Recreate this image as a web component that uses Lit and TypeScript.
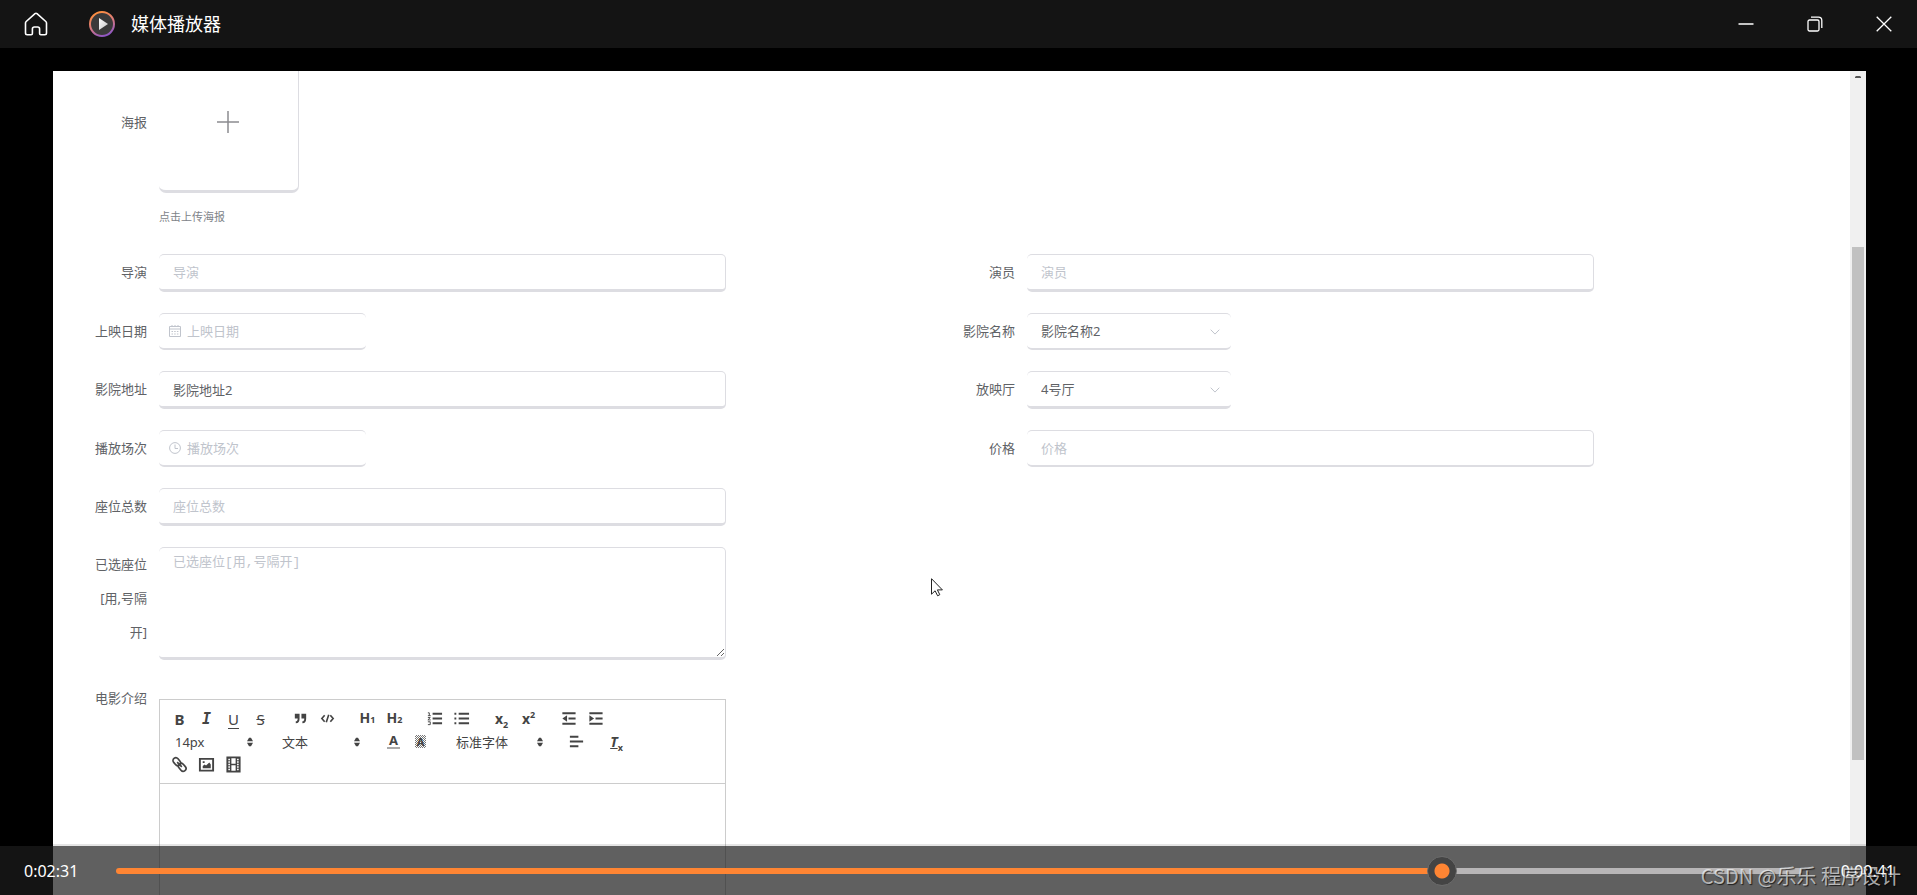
import { LitElement, html, css, svg, nothing } from "lit";
import { customElement, property, state } from "lit/decorators.js";
import { classMap } from "lit/directives/class-map.js";
import { styleMap } from "lit/directives/style-map.js";

type Field = {
  id: string;
  label: string;
  kind: "text" | "date" | "time" | "select";
  value?: string;
};

const ROWS: { thick: boolean; fields: Field[] }[] = [
  {
    thick: true,
    fields: [
      { id: "director", label: "导演", kind: "text" },
      { id: "actor", label: "演员", kind: "text" },
    ],
  },
  {
    thick: false,
    fields: [
      { id: "release", label: "上映日期", kind: "date" },
      { id: "cinema", label: "影院名称", kind: "select", value: "影院名称2" },
    ],
  },
  {
    thick: true,
    fields: [
      { id: "address", label: "影院地址", kind: "text", value: "影院地址2" },
      { id: "hall", label: "放映厅", kind: "select", value: "4号厅" },
    ],
  },
  {
    thick: false,
    fields: [
      { id: "session", label: "播放场次", kind: "time" },
      { id: "price", label: "价格", kind: "text" },
    ],
  },
  { thick: true, fields: [{ id: "seats", label: "座位总数", kind: "text" }] },
];

const calendarIcon = svg`<svg class="prefix" viewBox="0 0 12 12" fill="none" stroke="#c0c4cc">
  <path d="M.5 1.5h11v10H.5zM.5 4h11M3 0v2M6 0v2M9 0v2"/><path d="M2.5 6.5h7M2.5 9h7" stroke-dasharray="1.5 1.2"/></svg>`;
const clockIcon = svg`<svg class="prefix" viewBox="0 0 12 12" fill="none" stroke="#c0c4cc">
  <circle cx="6" cy="6" r="5.4"/><path d="M6 2.5v4h3"/></svg>`;

const pickerArrows = svg`<svg class="updown" viewBox="0 0 6 10" fill="#444">
  <path d="M0 4.200 2 .7h2l2 3.500zM0 5.800l2 3.500h2l2-3.500z"/></svg>`;

@customElement("movie-form")
export class MovieForm extends LitElement {
  static styles = css`
    :host {
      display: block;
      color: #606266;
      font: 13px/20px "Noto Sans", "Noto Sans CJK SC", sans-serif;
    }
    * { box-sizing: border-box; }
    .form {
      display: flex;
      flex-direction: column;
      gap: 21px;
      padding: 0 25px 0 36px;
    }
    .row {
      display: grid;
      grid-template-columns: 1fr 1fr;
    }
    .item {
      display: grid;
      grid-template-columns: 70px minmax(0, 71fr) 29fr;
      align-items: start;
    }
    .label {
      padding-right: 12px;
      text-align: right;
      line-height: 37px;
    }
    .label.tall { line-height: 34px; }
    .label.poster { line-height: 138px; }
    .control {
      position: relative;
      height: 37px;
    }
    .control.short { width: 207px; }
    .control.pick { width: 204px; }
    .control.thick { height: 38px; }
    .control.area { height: 113px; }
    .box {
      display: block;
      width: 100%;
      height: 100%;
      margin: 0;
      padding: 0 13px 0 14px;
      color: #606266;
      font: inherit;
      background: #fff;
      border: 1px solid #dddde2;
      border-left-width: 0;
      border-bottom-width: 2px;
      border-radius: 5px;
      outline: 0;
      appearance: none;
    }
    .thick .box, .area .box { border-bottom-width: 3px; }
    .short .box { padding-left: 28px; border-right-width: 0; }
    .pick .box { border-right-width: 0; }
    .area .box {
      padding-top: 5px;
      resize: vertical;
      font-family: "Liberation Mono", "Noto Sans CJK SC", monospace;
    }
    .box::placeholder { color: #c0c4cc; opacity: 1; }
    .prefix {
      position: absolute;
      left: 10px;
      top: 12px;
      width: 12px;
      height: 12px;
    }
    .chevron {
      position: absolute;
      right: 11px;
      top: 16px;
      width: 10px;
      height: 6px;
      pointer-events: none;
    }
    .upload {
      display: grid;
      place-items: center;
      width: 140px;
      height: 140px;
      padding: 0;
      background: #fff;
      border: 1px solid #dddde2;
      border-left-width: 0;
      border-bottom-width: 3px;
      border-radius: 7px;
    }
    .plus { width: 22px; height: 22px; margin-right: 2px; }
    .tip {
      margin: 14px 0 6px;
      color: #808389;
      font-size: 11px;
    }
    .editor {
      margin-top: 18px;
      border: 1px solid #ccc;
    }
    .toolbar {
      padding: 7px 12px 7px 6px;
      border-bottom: 1px solid #ccc;
    }
    .tools { display: flex; gap: 13px; height: 23px; }
    .group { display: flex; }
    .tool {
      display: grid;
      place-items: center;
      width: 27px;
      height: 23px;
      padding: 0;
      color: #444;
      background: none;
      border: 0;
      font: bold 15px/18px "Noto Sans", sans-serif;
    }
    .tool svg { width: 17px; height: 17px; }
    .italic { font: italic bold 15px/18px "DejaVu Sans Mono", monospace; }
    .under { font-weight: 400; text-decoration: underline; text-underline-offset: 3px; }
    .strike { font-weight: 400; text-decoration: line-through; }
    .head { font-size: 14px; }
    .small { font-size: 9px; }
    .ink { line-height: 13px; border-bottom: 2px solid #aaa; padding: 0 2px; font-size: 13px; }
    .shade {
      padding: 0 2px;
      font-size: 11px;
      line-height: 13px;
      background: repeating-conic-gradient(#777 0 25%, #fff 0 50%) 0 0 / 2px 2px;
    }
    .clear { font-style: italic; text-decoration: underline; font-size: 14px; }
    sub, sup { line-height: 0; }
    .picker { position: relative; width: 94px; }
    .picker.wide { width: 103px; }
    .picker select {
      width: 100%;
      height: 23px;
      padding: 0 9px;
      color: #444;
      font: inherit;
      background: none;
      border: 0;
      appearance: none;
    }
    .updown {
      position: absolute;
      right: 7px;
      top: 7px;
      width: 6px;
      height: 10px;
      pointer-events: none;
    }
    .page { min-height: 190px; outline: 0; }
  `;

  private control(f: Field, thick: boolean) {
    const classes = classMap({
      control: true,
      thick,
      short: f.kind === "date" || f.kind === "time",
      pick: f.kind === "select",
    });
    if (f.kind === "select") {
      return html`<div class=${classes}>
        <select class="box" id=${f.id}><option>${f.value}</option></select>
        <svg class="chevron" viewBox="0 0 10 6" fill="none" stroke="#c0c4cc"><path d="m.7.7 4.3 4.4L9.3.7" /></svg>
      </div>`;
    }
    return html`<div class=${classes}>
      <input class="box" id=${f.id} type="text" placeholder=${f.label} .value=${f.value ?? ""} />
      ${f.kind === "date" ? calendarIcon : f.kind === "time" ? clockIcon : nothing}
    </div>`;
  }

  private picker(label: string, text: string, wide = false) {
    return html`<div class=${classMap({ picker: true, wide })}>
      <select aria-label=${label}><option>${text}</option></select>${pickerArrows}
    </div>`;
  }

  private tool(title: string, content: unknown) {
    return html`<button class="tool" type="button" aria-label=${title}>${content}</button>`;
  }

  private glyph(content: unknown) {
    return html`<svg viewBox="0 0 18 18" fill="none" stroke="#444" stroke-width="2">${content}</svg>`;
  }

  private toolbar() {
    return html`<div class="toolbar">
      <div class="tools">
        <div class="group">
          ${this.tool("加粗", "B")}
          ${this.tool("斜体", html`<span class="italic">I</span>`)}
          ${this.tool("下划线", html`<span class="under">U</span>`)}
          ${this.tool("删除线", html`<span class="strike">S</span>`)}
        </div>
        <div class="group">
          ${this.tool("引用", this.glyph(svg`<path fill="#444" stroke="none" d="M3 4h5v5c0 3-1 5-4 5v-2c1.500 0 2-1 2-3H3zM10 4h5v5c0 3-1 5-4 5v-2c1.500 0 2-1 2-3h-3z"/>`))}
          ${this.tool("代码", this.glyph(svg`<path d="M6 5.500 3 9l3 3.500M12 5.500 15 9l-3 3.500M10.300 5l-2.600 8" stroke-width="1.700"/>`))}
        </div>
        <div class="group">
          ${this.tool("标题一", html`<span class="head">H<span class="small">1</span></span>`)}
          ${this.tool("标题二", html`<span class="head">H<span class="small">2</span></span>`)}
        </div>
        <div class="group">
          ${this.tool("有序列表", this.glyph(svg`<path d="M7 4h10M7 9h10M7 14h10"/><path stroke-width="1" d="M2 3h1.500v3M2 6h3M2 8h2.500L2 10.500h3M2 12.500h2.500v3H2"/>`))}
          ${this.tool("无序列表", this.glyph(svg`<path d="M6 4h11M6 9h11M6 14h11M1.500 4h2M1.500 9h2M1.500 14h2"/>`))}
        </div>
        <div class="group">
          ${this.tool("下标", html`<span class="head">x<sub class="small">2</sub></span>`)}
          ${this.tool("上标", html`<span class="head">x<sup class="small">2</sup></span>`)}
        </div>
        <div class="group">
          ${this.tool("减少缩进", this.glyph(svg`<path d="M2.500 3.500h14M9 9h7.500M2.500 14.500h14"/><path fill="#444" stroke="none" d="M7.500 5.500v7L2.500 9z"/>`))}
          ${this.tool("增加缩进", this.glyph(svg`<path d="M2.500 3.500h14M9 9h7.500M2.500 14.500h14"/><path fill="#444" stroke="none" d="M2.500 5.500v7L7.500 9z"/>`))}
        </div>
      </div>
      <div class="tools">
        ${this.picker("字号", "14px")} ${this.picker("段落", "文本")}
        <div class="group">
          ${this.tool("文字颜色", html`<span class="ink">A</span>`)}
          ${this.tool("背景颜色", html`<span class="shade">A</span>`)}
        </div>
        ${this.picker("字体", "标准字体", true)}
        <div class="group">
          ${this.tool("对齐", this.glyph(svg`<path d="M2 4h9M2 9h14M2 14h9"/>`))}
        </div>
        <div class="group">
          ${this.tool("清除格式", html`<span><span class="clear">T</span><sub class="small">x</sub></span>`)}
        </div>
      </div>
      <div class="tools">
        <div class="group">
          ${this.tool("链接", this.glyph(svg`<g stroke-width="1.800"><rect x="1.600" y="3" width="9" height="6" rx="3" transform="rotate(50 6.100 6)"/><rect x="7.400" y="9" width="9" height="6" rx="3" transform="rotate(50 11.900 12)"/><path d="m6.500 6.500 5 5"/></g>`))}
          ${this.tool("图片", this.glyph(svg`<path d="M2 3h14v12.500H2z"/><path fill="#444" stroke="none" d="M5 13v-2.500l2-1.500 1.500 1L12 7l1.500 2v4zM5 5.500h2v2H5z"/>`))}
          ${this.tool("视频", this.glyph(svg`<path d="M2.500 1.500h13v15h-13z"/><path stroke-width="1.500" d="M6 2v14M12 2v14M6 9h6"/><path stroke-width="2" stroke-dasharray="1 1.600" d="M4.200 2v14M13.800 2v14"/>`))}
        </div>
      </div>
    </div>`;
  }

  render() {
    return html`<form class="form">
      <div class="item">
        <label class="label poster" for="poster">海报</label>
        <div>
          <button class="upload" id="poster" type="button" aria-label="海报">
            <svg class="plus" viewBox="0 0 22 22" stroke="#8c8c90" stroke-width="1.500"><path d="M11 0v22M0 11h22" /></svg>
          </button>
          <p class="tip">点击上传海报</p>
        </div>
      </div>
      ${ROWS.map(
        (row) => html`<div class="row">
          ${row.fields.map(
            (f) => html`<div class="item">
              <label class="label" for=${f.id}>${f.label}</label>
              ${this.control(f, row.thick)}
            </div>`
          )}
        </div>`
      )}
      <div class="row">
        <div class="item">
          <label class="label tall" for="taken">已选座位[用,号隔开]</label>
          <div class="control area">
            <textarea class="box" id="taken" placeholder="已选座位[用,号隔开]"></textarea>
          </div>
        </div>
      </div>
      <div class="row">
        <div class="item">
          <label class="label tall" id="intro-label">电影介绍</label>
          <div class="editor">
            ${this.toolbar()}
            <div class="page" contenteditable="true" role="textbox" aria-labelledby="intro-label"></div>
          </div>
        </div>
      </div>
    </form>`;
  }
}

@customElement("player-bar")
export class PlayerBar extends LitElement {
  @property({ type: Number }) duration = 192;
  @state() private position = 152;

  static styles = css`
    :host {
      display: flex;
      align-items: center;
      height: 49px;
      padding: 0 22px 0 24px;
      color: #fff;
      background: rgba(28, 28, 28, 0.7);
      font: 16px/24px "Noto Sans", sans-serif;
    }
    .time { flex: none; width: 92px; }
    .time.left { width: 93px; text-align: right; }
    .seek {
      flex: 1;
      min-width: 0;
      height: 32px;
      margin: 0;
      background: none;
      appearance: none;
    }
    .seek::-webkit-slider-runnable-track {
      height: 6px;
      border-radius: 3px;
      background: linear-gradient(90deg, #ff8533 var(--played), #b8b6b7 var(--played));
    }
    .seek::-webkit-slider-thumb {
      width: 30px;
      height: 30px;
      margin-top: -12px;
      border: 1px solid #6b6b6b;
      border-radius: 50%;
      background: radial-gradient(circle, #ff8533 7px, #444 8px);
      appearance: none;
    }
  `;

  render() {
    const played = `${(this.position / this.duration) * 100}%`;
    return html`
      <span class="time">0:02:31</span>
      <input
        class="seek"
        type="range"
        aria-label="播放进度"
        min="0"
        max=${this.duration}
        .value=${String(this.position)}
        style=${styleMap({ "--played": played })}
        @input=${(e: Event) => (this.position = Number((e.target as HTMLInputElement).value))}
      />
      <span class="time left">0:00:41</span>
    `;
  }
}

@customElement("app-root")
export class AppRoot extends LitElement {
  static styles = css`
    :host {
      position: relative;
      display: flex;
      flex-direction: column;
      height: 100vh;
      overflow: hidden;
      background: #000;
      color: #fff;
      font: 18px/24px "Noto Sans", "Noto Sans CJK SC", sans-serif;
    }
    * { box-sizing: border-box; }
    .titlebar {
      flex: none;
      display: flex;
      align-items: center;
      height: 48px;
      padding-left: 12px;
      background: #141414;
    }
    .home, .win {
      display: grid;
      place-items: center;
      height: 48px;
      padding: 0;
      background: none;
      border: 0;
    }
    .home { width: 48px; }
    .win { width: 69px; padding-left: 3px; }
    .home svg { width: 24px; height: 24px; }
    .win svg { width: 16px; height: 16px; }
    .logo { width: 26px; height: 26px; margin: 0 16px 0 29px; }
    .title {
      flex: 1;
      margin: 0;
      font-size: 18px;
      font-weight: 400;
    }
    .stage {
      flex: 1;
      min-height: 0;
      display: flex;
      padding: 23px 51px 0 53px;
    }
    .frame {
      flex: 1;
      min-width: 0;
      display: flex;
      overflow: hidden;
      background: #fff;
    }
    .scrolled {
      flex: 1;
      min-width: 0;
      margin-top: -18px;
    }
    .scrollbar {
      display: grid;
      grid-template-rows: 176fr 513fr 135fr;
      width: 16px;
      padding: 0 2px;
      background: #f0f0f0;
    }
    .up { width: 6px; height: 2px; margin: 5px auto 0 3px; }
    .grip { background: #c1c1c1; }
    .cursor {
      position: absolute;
      left: 931px;
      top: 578px;
      width: 13px;
      height: 19px;
    }
    .overlay {
      position: absolute;
      left: 0;
      right: 0;
      bottom: 0;
    }
    .shadow {
      height: 2px;
      background: rgba(0, 0, 0, 0.1);
    }
    .mark {
      position: absolute;
      right: 16px;
      bottom: 5px;
      margin: 0;
      color: rgba(255, 255, 255, 0.65);
      text-shadow: 1px 1px 1px rgba(0, 0, 0, 0.7);
      font: 20px/28px "Noto Sans CJK SC", sans-serif;
      pointer-events: none;
    }
  `;

  render() {
    return html`
      <header class="titlebar">
        <button class="home" type="button" aria-label="主页">
          <svg viewBox="0 0 24 24" fill="none" stroke="#fff" stroke-width="1.600" stroke-linejoin="round">
            <path d="M11 1.700 2.200 9.500q-.7.6-.7 1.600v10q0 1.700 1.700 1.700h4q1.200 0 1.200-1.200V17q0-2 2-2h3.200q2 0 2 2v4.600q0 1.200 1.200 1.200h4q1.700 0 1.700-1.700v-10q0-1-.7-1.600L13 1.700q-1-.9-2 0z" />
          </svg>
        </button>
        <svg class="logo" viewBox="0 0 26 26">
          <defs>
            <linearGradient id="ring" x1=".3" y1="0" x2=".7" y2="1">
              <stop offset="0" stop-color="#ff8f3c" />
              <stop offset=".5" stop-color="#d97a80" />
              <stop offset="1" stop-color="#8a55c8" />
            </linearGradient>
            <linearGradient id="tri" x1="0" y1="0" x2="1" y2="1">
              <stop offset="0" stop-color="#fff" />
              <stop offset="1" stop-color="#c4c4c4" />
            </linearGradient>
          </defs>
          <circle cx="13" cy="13" r="12" fill="#3a3a3a" stroke="url(#ring)" stroke-width="2" />
          <path d="M10 7v12l9-6z" fill="url(#tri)" />
        </svg>
        <h1 class="title">媒体播放器</h1>
        <button class="win" type="button" aria-label="最小化">
          <svg viewBox="0 0 16 16" stroke="#fff" stroke-width="1.500"><path d="M.5 8h15" /></svg>
        </button>
        <button class="win" type="button" aria-label="还原">
          <svg viewBox="0 0 16 16" fill="none" stroke="#fff" stroke-width="1.300">
            <rect x="1" y="4" width="11" height="11" rx="1.500" />
            <path d="M4 1.200h7.500q3.300 0 3.300 3.300V12" />
          </svg>
        </button>
        <button class="win" type="button" aria-label="关闭">
          <svg viewBox="0 0 16 16" stroke="#fff" stroke-width="1.300"><path d="m.7.7 14.600 14.600M15.300.7.7 15.300" /></svg>
        </button>
      </header>
      <main class="stage">
        <div class="frame">
          <movie-form class="scrolled"></movie-form>
          <div class="scrollbar">
            <svg class="up" viewBox="0 0 6 2" fill="#555"><path d="M1 0h4l1 1v1H0V1z" /></svg>
            <div class="grip"></div>
          </div>
        </div>
      </main>
      <svg class="cursor" viewBox="0 0 13 19" fill="#fff" stroke="#222">
        <path d="M.5.7v15.500l3.600-3.400 2.500 5 2.200-1.100-2.400-4.800h5z" />
      </svg>
      <footer class="overlay">
        <div class="shadow"></div>
        <player-bar></player-bar>
      </footer>
      <p class="mark">CSDN @乐乐 程序设计</p>
    `;
  }
}
